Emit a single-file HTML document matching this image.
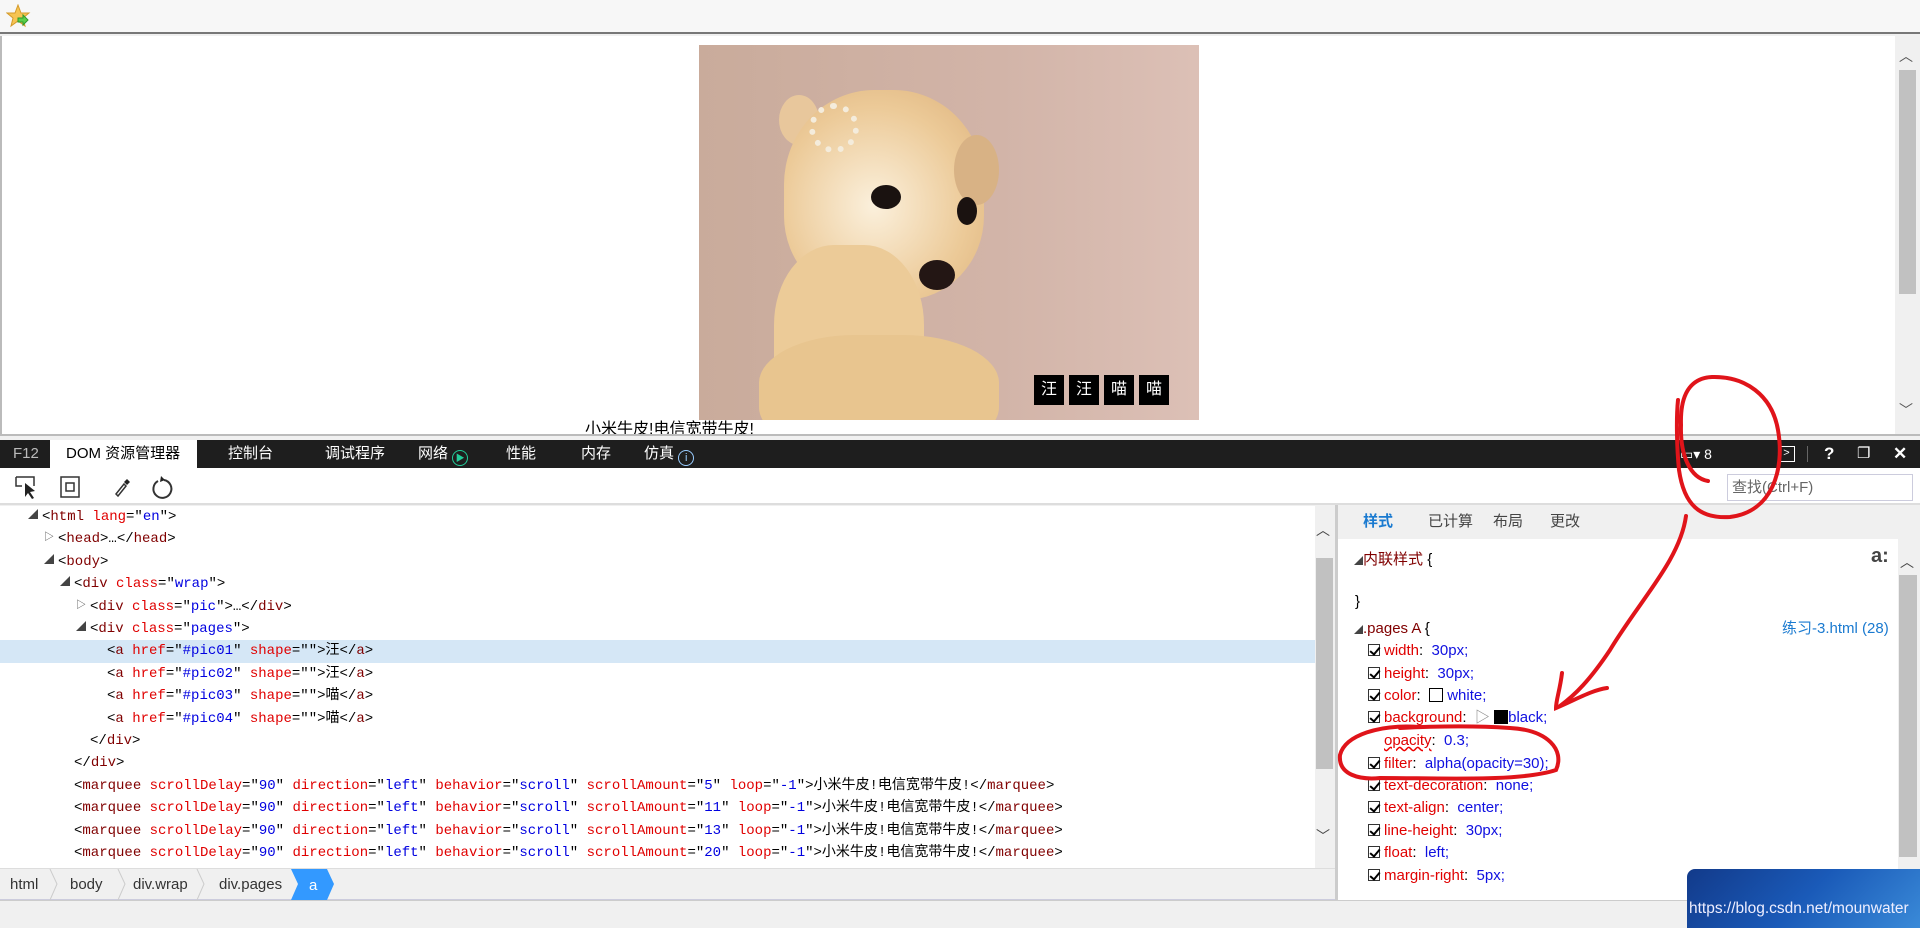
<!DOCTYPE html>
<html><head><meta charset="utf-8">
<style>
*{margin:0;padding:0;box-sizing:border-box}
body{width:1920px;height:928px;overflow:hidden;background:#f0f0f0;font-family:"Liberation Sans","Noto Sans CJK SC",sans-serif;position:relative}
.abs{position:absolute}
.code{font-family:"Liberation Mono","Noto Sans CJK SC",monospace;font-size:14px;color:#000}
.row{position:absolute;left:0;height:22.4px;line-height:22.4px;white-space:nowrap}
.t{color:#800000}.n{color:#e00000}.v{color:#0000e0}
.tri{position:absolute;font-size:10px;color:#444}
.sr{position:absolute;left:1368px;height:22px;line-height:22px;font-size:15px;white-space:nowrap}
.cb{display:inline-block;width:12px;height:12px;border:1px solid #333;vertical-align:-1px;margin-right:4px;position:relative;background:#fff}
.cb:after{content:"";position:absolute;left:3px;top:0px;width:4px;height:8px;border:solid #000;border-width:0 2px 2px 0;transform:rotate(40deg)}
.p{color:#e00000}.q{color:#1010e0}
.btn{position:absolute;top:375px;width:30px;height:30px;background:#000;color:#fff;font-size:16px;line-height:30px;text-align:center}
.bc{position:absolute;top:869px;height:31px;line-height:31px;font-size:15px;color:#333}
</style></head><body>
<div class="abs" style="left:0;top:0;width:1920px;height:34px;background:#f7f7f7;border-bottom:2px solid #777"></div>
<svg class="abs" style="left:6px;top:4px" width="26" height="26" viewBox="0 0 26 26"><polygon points="12,1 15,9 23,9 17,14 19,22 12,17 5,22 7,14 1,9 9,9" fill="#f6c453" stroke="#d49a2a"/><path d="M12 14h5v-3l5 5-5 5v-3h-5z" fill="#5ccf4a" stroke="#2f9a2a"/></svg>
<div class="abs" style="left:0;top:36px;width:1920px;height:400px;background:#fff;border-left:2px solid #bbb;border-bottom:2px solid #bbb"></div>
<div class="abs" style="left:1895px;top:36px;width:25px;height:398px;background:#f0f0f0"></div>
<div class="abs" style="left:1899px;top:70px;width:17px;height:224px;background:#c1c1c1"></div>
<div class="abs" style="left:1899px;top:46px;font-size:14px;color:#555">︿</div>
<div class="abs" style="left:1899px;top:400px;font-size:14px;color:#555">﹀</div>
<div class="abs" style="left:699px;top:45px;width:500px;height:375px;overflow:hidden;background:linear-gradient(90deg,#c9ab9b 0%,#d2b4a8 60%,#dcc0b6 100%)">
 <div class="abs" style="left:80px;top:50px;width:40px;height:50px;border-radius:50%;background:#e8c79c"></div>
 <div class="abs" style="left:85px;top:45px;width:200px;height:210px;border-radius:45% 45% 40% 40%;background:radial-gradient(ellipse at 45% 55%,#fbf0dc 0%,#ecca98 60%,#dcb07a 100%)"></div>
 <div class="abs" style="left:75px;top:200px;width:150px;height:200px;border-radius:40% 40% 0 0;background:#eccb98"></div>
 <div class="abs" style="left:60px;top:290px;width:240px;height:120px;border-radius:40%;background:#e8c58f"></div>
 <div class="abs" style="left:255px;top:90px;width:45px;height:70px;border-radius:50%;background:#d8b285"></div>
 <div class="abs" style="left:172px;top:140px;width:30px;height:24px;border-radius:50%;background:#1a1210"></div>
 <div class="abs" style="left:258px;top:152px;width:20px;height:28px;border-radius:50%;background:#1a1210"></div>
 <div class="abs" style="left:220px;top:215px;width:36px;height:30px;border-radius:50%;background:#231614"></div>
 <div class="abs" style="left:110px;top:58px;width:50px;height:50px;border-radius:50%;border:6px dotted #f4ecdc"></div>
</div>
<div class="btn" style="left:1034px">汪</div><div class="btn" style="left:1069px">汪</div><div class="btn" style="left:1104px">喵</div><div class="btn" style="left:1139px">喵</div>
<div class="abs" style="left:585px;top:420px;width:200px;height:14px;overflow:hidden;font-size:16px;line-height:20px;color:#000">小米牛皮!电信宽带牛皮!</div>
<div class="abs" style="left:0;top:440px;width:1920px;height:28px;background:#1e1e1e;color:#fff;font-size:15px;line-height:28px">
 <span class="abs" style="left:13px;color:#bbb">F12</span>
 <span class="abs" style="left:50px;width:147px;height:28px;background:#fff;color:#000;padding-left:16px">DOM 资源管理器</span>
 <span class="abs" style="left:228px">控制台</span><span class="abs" style="left:325px">调试程序</span>
 <span class="abs" style="left:418px">网络 <span style="display:inline-block;width:16px;height:16px;border:1px solid #2c9;border-radius:50%;vertical-align:-3px;font-size:9px;line-height:14px;text-align:center;color:#2c9">▶</span></span>
 <span class="abs" style="left:506px">性能</span><span class="abs" style="left:581px">内存</span>
 <span class="abs" style="left:644px">仿真 <span style="display:inline-block;width:16px;height:16px;border:1px solid #9cf;border-radius:50%;vertical-align:-3px;font-size:11px;line-height:14px;text-align:center;color:#9cf">i</span></span>
 <span class="abs" style="left:1680px;font-size:14px">▭▾ 8</span>
 <span class="abs" style="left:1778px;top:6px;width:17px;height:16px;border:1.5px solid #fff;font-size:11px;line-height:13px;text-align:center">&gt;</span>
 <span class="abs" style="left:1807px;top:6px;width:1px;height:16px;background:#666"></span>
 <span class="abs" style="left:1824px;font-weight:bold;font-size:17px">?</span>
 <span class="abs" style="left:1857px;font-size:15px">❐</span>
 <span class="abs" style="left:1893px;font-weight:bold;font-size:17px">✕</span>
</div>
<div class="abs" style="left:0;top:468px;width:1920px;height:37px;background:#fff;border-bottom:2px solid #ddd"></div>
<svg class="abs" style="left:14px;top:474px" width="170" height="26" viewBox="0 0 170 26"><path d="M2 3h18v9" fill="none" stroke="#333" stroke-width="1.5"/><path d="M2 3v9h6" fill="none" stroke="#333" stroke-width="1.5"/><path d="M11 9l0 14 3-4 4 6 2-1-4-6 5-1z" fill="#222"/><rect x="47" y="3" width="18" height="20" fill="none" stroke="#333" stroke-width="1.5"/><rect x="52" y="9" width="8" height="8" fill="none" stroke="#333" stroke-width="1.5"/><path d="M102 20l8-10 2 2-8 10z" fill="none" stroke="#333" stroke-width="1.5"/><path d="M110 8l3-3 3 3-3 3z" fill="#222"/><path d="M144 7a9 9 0 1 0 6 -1" fill="none" stroke="#333" stroke-width="2"/><path d="M147 2l4 4-5 2z" fill="#222"/></svg>
<div class="abs" style="left:1727px;top:474px;width:186px;height:27px;border:1px solid #ccd;background:#fff;font-size:15px;line-height:25px;color:#666;padding-left:4px">查找(Ctrl+F)</div>
<div class="abs code" style="left:0;top:506px;width:1315px;height:363px;background:#fff;overflow:hidden">
 <div class="row" style="top:134.4px;width:1315px;background:#d5e7f6"></div>
 <div class="row" style="top:0;left:42px"><span class="tri" style="left:-14px">◢</span>&lt;<span class="t">html</span> <span class="n">lang</span>="<span class="v">en</span>"&gt;</div>
 <div class="row" style="top:22.4px;left:58px"><span class="tri" style="left:-14px">▷</span>&lt;<span class="t">head</span>&gt;…&lt;/<span class="t">head</span>&gt;</div>
 <div class="row" style="top:44.8px;left:58px"><span class="tri" style="left:-14px">◢</span>&lt;<span class="t">body</span>&gt;</div>
 <div class="row" style="top:67.2px;left:74px"><span class="tri" style="left:-14px">◢</span>&lt;<span class="t">div</span> <span class="n">class</span>="<span class="v">wrap</span>"&gt;</div>
 <div class="row" style="top:89.6px;left:90px"><span class="tri" style="left:-14px">▷</span>&lt;<span class="t">div</span> <span class="n">class</span>="<span class="v">pic</span>"&gt;…&lt;/<span class="t">div</span>&gt;</div>
 <div class="row" style="top:112px;left:90px"><span class="tri" style="left:-14px">◢</span>&lt;<span class="t">div</span> <span class="n">class</span>="<span class="v">pages</span>"&gt;</div>
 <div class="row" style="top:134.4px;left:107px">&lt;<span class="t">a</span> <span class="n">href</span>="<span class="v">#pic01</span>" <span class="n">shape</span>=""&gt;汪&lt;/<span class="t">a</span>&gt;</div>
 <div class="row" style="top:156.8px;left:107px">&lt;<span class="t">a</span> <span class="n">href</span>="<span class="v">#pic02</span>" <span class="n">shape</span>=""&gt;汪&lt;/<span class="t">a</span>&gt;</div>
 <div class="row" style="top:179.2px;left:107px">&lt;<span class="t">a</span> <span class="n">href</span>="<span class="v">#pic03</span>" <span class="n">shape</span>=""&gt;喵&lt;/<span class="t">a</span>&gt;</div>
 <div class="row" style="top:201.6px;left:107px">&lt;<span class="t">a</span> <span class="n">href</span>="<span class="v">#pic04</span>" <span class="n">shape</span>=""&gt;喵&lt;/<span class="t">a</span>&gt;</div>
 <div class="row" style="top:224px;left:90px">&lt;/<span class="t">div</span>&gt;</div>
 <div class="row" style="top:246.4px;left:74px">&lt;/<span class="t">div</span>&gt;</div>
 <div class="row" style="top:268.8px;left:74px">&lt;<span class="t">marquee</span> <span class="n">scrollDelay</span>="<span class="v">90</span>" <span class="n">direction</span>="<span class="v">left</span>" <span class="n">behavior</span>="<span class="v">scroll</span>" <span class="n">scrollAmount</span>="<span class="v">5</span>" <span class="n">loop</span>="<span class="v">-1</span>"&gt;小米牛皮!电信宽带牛皮!&lt;/<span class="t">marquee</span>&gt;</div>
 <div class="row" style="top:291.2px;left:74px">&lt;<span class="t">marquee</span> <span class="n">scrollDelay</span>="<span class="v">90</span>" <span class="n">direction</span>="<span class="v">left</span>" <span class="n">behavior</span>="<span class="v">scroll</span>" <span class="n">scrollAmount</span>="<span class="v">11</span>" <span class="n">loop</span>="<span class="v">-1</span>"&gt;小米牛皮!电信宽带牛皮!&lt;/<span class="t">marquee</span>&gt;</div>
 <div class="row" style="top:313.6px;left:74px">&lt;<span class="t">marquee</span> <span class="n">scrollDelay</span>="<span class="v">90</span>" <span class="n">direction</span>="<span class="v">left</span>" <span class="n">behavior</span>="<span class="v">scroll</span>" <span class="n">scrollAmount</span>="<span class="v">13</span>" <span class="n">loop</span>="<span class="v">-1</span>"&gt;小米牛皮!电信宽带牛皮!&lt;/<span class="t">marquee</span>&gt;</div>
 <div class="row" style="top:336px;left:74px">&lt;<span class="t">marquee</span> <span class="n">scrollDelay</span>="<span class="v">90</span>" <span class="n">direction</span>="<span class="v">left</span>" <span class="n">behavior</span>="<span class="v">scroll</span>" <span class="n">scrollAmount</span>="<span class="v">20</span>" <span class="n">loop</span>="<span class="v">-1</span>"&gt;小米牛皮!电信宽带牛皮!&lt;/<span class="t">marquee</span>&gt;</div>
</div>
<div class="abs" style="left:1315px;top:505px;width:20px;height:364px;background:#f0f0f0"></div>
<div class="abs" style="left:1316px;top:558px;width:17px;height:211px;background:#c1c1c1"></div>
<div class="abs" style="left:1316px;top:520px;font-size:14px;color:#444">︿</div>
<div class="abs" style="left:1316px;top:826px;font-size:14px;color:#444">﹀</div>
<div class="abs" style="left:0;top:868px;width:1335px;height:32px;background:#f0f0f0;border-top:1px solid #ddd;border-bottom:1px solid #ccd"></div>
<div class="bc" style="left:10px">html</div><div class="bc" style="left:70px">body</div><div class="bc" style="left:133px">div.wrap</div><div class="bc" style="left:219px">div.pages</div>
<svg class="abs" style="left:0;top:869px" width="340" height="31"><path d="M50 0l7 15-7 16M118 0l7 15-7 16M197 0l7 15-7 16" fill="none" stroke="#ccc"/><path d="M291 0h36l7 15-7 16h-36l7-16z" fill="#3399ff"/><text x="309" y="21" font-size="15" fill="#fff" font-family="Liberation Sans">a</text></svg>
<div class="abs" style="left:1335px;top:505px;width:3px;height:395px;background:#ccc"></div>
<div class="abs" style="left:1338px;top:505px;width:582px;height:34px;background:#f0f0f0;font-size:15px;line-height:34px;color:#444">
 <span class="abs" style="left:25px;color:#1a7ad0;font-weight:bold">样式</span><span class="abs" style="left:90px">已计算</span><span class="abs" style="left:155px">布局</span><span class="abs" style="left:212px">更改</span>
</div>
<div class="abs" style="left:1338px;top:539px;width:560px;height:361px;background:#fff;overflow:hidden">
 <div class="abs" style="left:16px;top:10px;font-size:15px;line-height:22px;color:#800000"><span style="font-size:9px;color:#444">◢</span>内联样式 <span style="color:#000">{</span></div>
 <div class="abs" style="left:533px;top:6px;font-size:20px;font-weight:bold;color:#444">a:</div>
 <div class="abs" style="left:17px;top:52px;font-size:15px;line-height:22px">}</div>
 <div class="abs" style="left:16px;top:79px;font-size:15px;line-height:22px;color:#800000"><span style="font-size:9px;color:#444">◢</span>.pages A <span style="color:#000">{</span></div>
 <div class="abs" style="left:444px;top:79px;font-size:15px;line-height:22px;color:#1a7ad0">练习-3.html (28)</div>
</div>
<div class="sr" style="top:640px"><span class="cb"></span><span class="p">width</span>:&nbsp; <span class="q">30px;</span></div>
<div class="sr" style="top:663px"><span class="cb"></span><span class="p">height</span>:&nbsp; <span class="q">30px;</span></div>
<div class="sr" style="top:685px"><span class="cb"></span><span class="p">color</span>:&nbsp; <span style="display:inline-block;width:14px;height:14px;border:1px solid #000;vertical-align:-2px"></span> <span class="q">white;</span></div>
<div class="sr" style="top:707px"><span class="cb"></span><span class="p">background</span>:&nbsp; <span style="color:#888">▷</span> <span style="display:inline-block;width:14px;height:14px;background:#000;vertical-align:-2px"></span><span class="q">black;</span></div>
<div class="sr" style="top:730px;left:1384px"><span class="p" style="text-decoration:underline wavy #e00">opacity</span>:&nbsp; <span class="q">0.3;</span></div>
<div class="sr" style="top:753px"><span class="cb"></span><span class="p">filter</span>:&nbsp; <span class="q">alpha(opacity=30);</span></div>
<div class="sr" style="top:775px"><span class="cb"></span><span class="p">text-decoration</span>:&nbsp; <span class="q">none;</span></div>
<div class="sr" style="top:797px"><span class="cb"></span><span class="p">text-align</span>:&nbsp; <span class="q">center;</span></div>
<div class="sr" style="top:820px"><span class="cb"></span><span class="p">line-height</span>:&nbsp; <span class="q">30px;</span></div>
<div class="sr" style="top:842px"><span class="cb"></span><span class="p">float</span>:&nbsp; <span class="q">left;</span></div>
<div class="sr" style="top:865px"><span class="cb"></span><span class="p">margin-right</span>:&nbsp; <span class="q">5px;</span></div>
<div class="abs" style="left:1898px;top:539px;width:22px;height:361px;background:#f0f0f0"></div>
<div class="abs" style="left:1899px;top:575px;width:18px;height:282px;background:#c1c1c1"></div>
<div class="abs" style="left:1900px;top:552px;font-size:14px;color:#444">︿</div>
<div class="abs" style="left:0;top:900px;width:1920px;height:28px;background:#f0f0f0;border-top:1px solid #ccc"></div>
<div class="abs" style="left:1687px;top:869px;width:233px;height:59px;border-radius:8px 0 0 0;background:linear-gradient(135deg,#123a8a,#1a5ab8 50%,#3a8ad8);color:#eef;font-size:15.5px;line-height:20px;padding-top:30px;padding-left:2px;white-space:nowrap;overflow:hidden">https://blog.csdn.net/mounwater</div>
<svg class="abs" style="left:0;top:0" width="1920" height="928">
<g fill="none" stroke="#e0141a" stroke-width="4" stroke-linecap="round">
<path d="M1708 481C1690 478 1680 455 1681 425C1680 395 1690 378 1712 377C1745 376 1772 395 1778 430C1785 470 1772 512 1730 517C1700 519 1684 505 1679 470C1677 450 1676 420 1678 400"/>
<path d="M1686 516C1680 560 1640 600 1610 650C1590 680 1575 695 1560 706"/>
<path d="M1562 673C1560 690 1556 700 1556 708C1575 700 1592 690 1607 688"/>
<path d="M1420 727C1380 724 1345 735 1340 755C1338 775 1360 780 1380 778C1440 778 1520 782 1556 770C1565 750 1548 730 1510 728C1480 726 1440 726 1400 728"/>
</g></svg>
</body></html>
